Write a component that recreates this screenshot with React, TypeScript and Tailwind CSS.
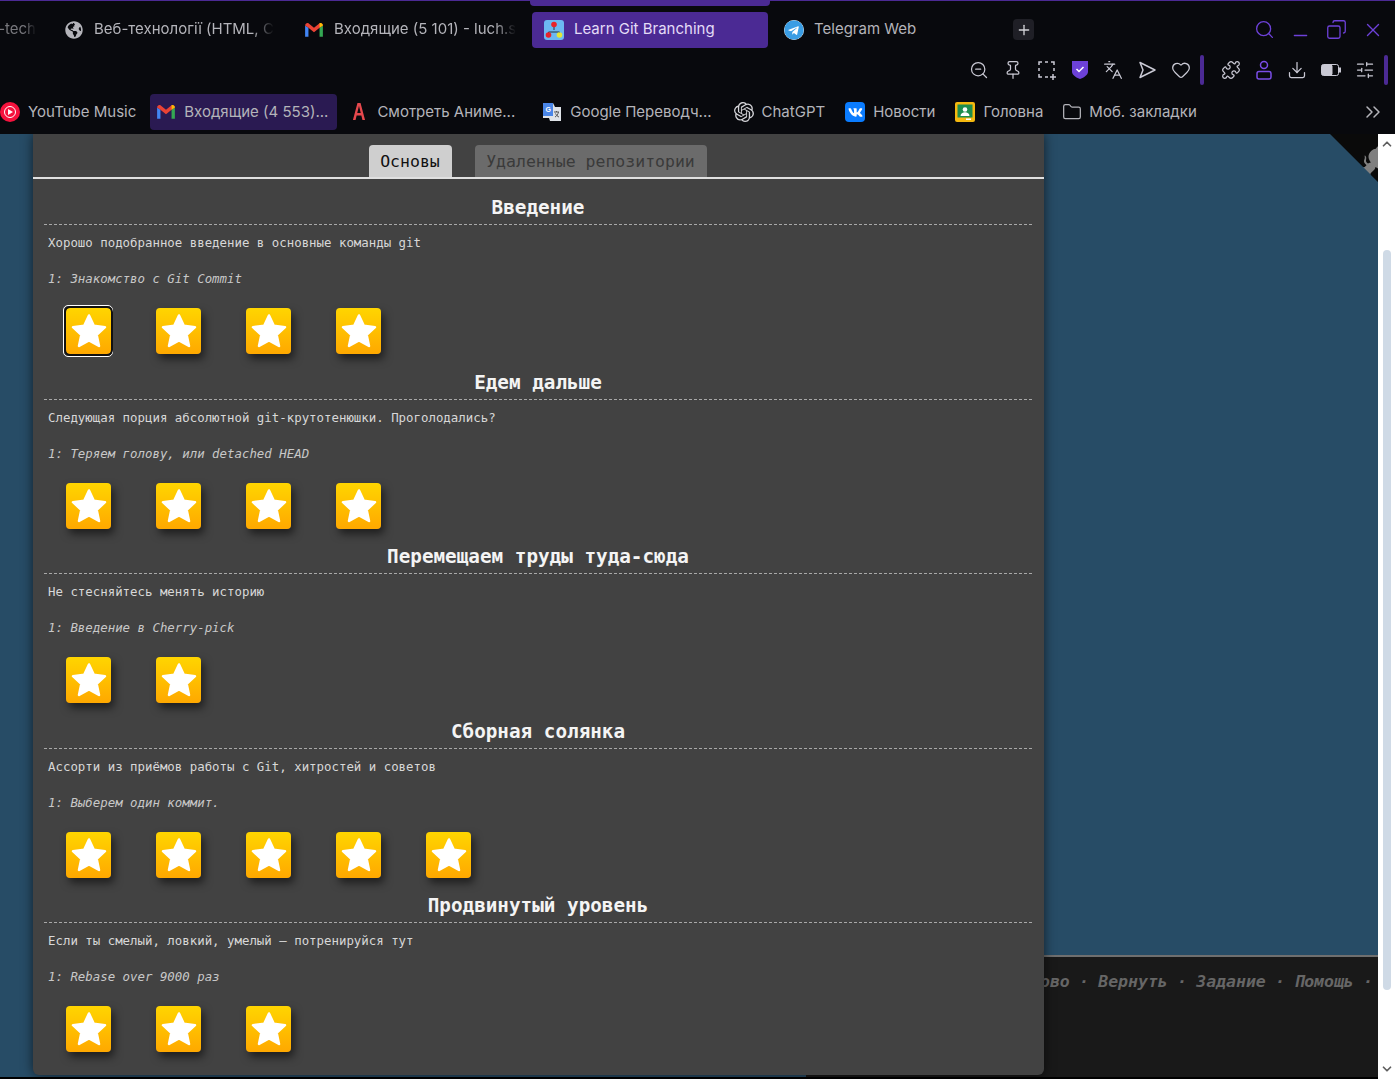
import type { ReactNode } from 'react';
import {
  ZoomOut,
  Pin,
  Languages,
  Heart,
  Puzzle,
  Download,
  SlidersHorizontal,
  Folder,
  Search,
  Minus,
  Copy,
  X,
  Plus,
  ChevronsRight,
  ChevronUp,
  ChevronDown,
} from 'lucide-react';
import { FaGlobeAmericas, FaTelegram, FaVk } from 'react-icons/fa';
import { SiOpenai } from 'react-icons/si';

const sections = [
  {
    title: 'Введение',
    text: 'Хорошо подобранное введение в основные команды git',
    level: '1: Знакомство с Git Commit',
    stars: 4,
    selected: true,
  },
  {
    title: 'Едем дальше',
    text: 'Следующая порция абсолютной git-крутотенюшки. Проголодались?',
    level: '1: Теряем голову, или detached HEAD',
    stars: 4,
  },
  {
    title: 'Перемещаем труды туда-сюда',
    text: 'Не стесняйтесь менять историю',
    level: '1: Введение в Cherry-pick',
    stars: 2,
  },
  {
    title: 'Сборная солянка',
    text: 'Ассорти из приёмов работы с Git, хитростей и советов',
    level: '1: Выберем один коммит.',
    stars: 5,
  },
  {
    title: 'Продвинутый уровень',
    text: 'Если ты смелый, ловкий, умелый – потренируйся тут',
    level: '1: Rebase over 9000 раз',
    stars: 3,
  },
];

function GmailIcon({ className }: { className?: string }) {
  return (
    <svg viewBox="0 0 18 14" className={className}>
      <path d="M1 13V3l3 2v8z" fill="#4285f4" />
      <path d="M14 13V5l3-2v10z" fill="#34a853" />
      <path d="M1 3c0-2 2-2.700 3-2l5 4 5-4c1-.7 3 0 3 2l-3 2-5 4-5-4z" fill="#ea4335" />
      <path d="M14 1c1-.7 3 0 3 2l-3 2z" fill="#fbbc04" />
    </svg>
  );
}

function GitBranchIcon() {
  return (
    <svg viewBox="0 0 20 20" className="w-5 h-5 rounded-[3px] bg-[#6cb8f2]">
      <path d="M10 5v5M4.500 15v-3h11v3" stroke="#27323f" strokeWidth="1" fill="none" />
      <circle cx="10" cy="4.500" r="2.800" fill="#e8232a" />
      <circle cx="4.500" cy="15" r="2.800" fill="#e8232a" />
      <circle cx="15.500" cy="15" r="2.800" fill="#e6e635" />
    </svg>
  );
}

function YoutubeMusicIcon() {
  return (
    <svg viewBox="0 0 20 20" className="w-5 h-5">
      <circle cx="10" cy="10" r="10" fill="#f5123d" />
      <circle cx="10" cy="10" r="5.500" fill="none" stroke="#fff" strokeWidth="1" />
      <path d="M8 7l5 3-5 3z" fill="#fff" />
    </svg>
  );
}

function TranslateIcon() {
  return (
    <svg viewBox="0 0 20 20" className="w-5 h-5">
      <path d="M1 1h10l2 4 6 0v14H8l-1-3H1z" fill="#dfe3e8" />
      <path d="M1 1h10v13H1z" fill="#4a86e8" />
      <text x="3.500" y="10" fontSize="7" fontWeight="700" fill="#fff" fontFamily="Liberation Sans, sans-serif">G</text>
      <path d="M12 10h5M14.500 9v1M13 15c2-1 3-3 3.500-5M13.500 11.500c.8 1.600 2 3 3.500 3.500" stroke="#555" strokeWidth="1" fill="none" />
    </svg>
  );
}

function VkIcon() {
  return (
    <div className="w-5 h-5 rounded-[4px] bg-[#0a7cff] flex items-center justify-center">
      <FaVk className="w-[15px] h-[15px] text-white" />
    </div>
  );
}

function ClassroomIcon() {
  return (
    <svg viewBox="0 0 20 20" className="w-5 h-5">
      <rect width="20" height="20" rx="2" fill="#f5b90f" />
      <rect x="2.500" y="2.500" width="15" height="13" fill="#1e8e4e" />
      <circle cx="10" cy="7.500" r="2.300" fill="#fff" />
      <path d="M5.500 14c0-5 9-5 9 0z" fill="#fff" />
      <rect x="11" y="16.500" width="5" height="1.500" fill="#fff" />
    </svg>
  );
}

function BatteryIcon() {
  return (
    <svg viewBox="0 0 20 12" className="w-5 h-3">
      <rect x="0.500" y="0.500" width="17" height="11" rx="2" fill="#08090d" stroke="#c9c9d4" />
      <rect x="0.500" y="0.500" width="11" height="11" rx="2" fill="#c9c9d4" />
      <rect x="18" y="3.500" width="2" height="5" fill="#c9c9d4" />
    </svg>
  );
}

function ShieldIcon() {
  return (
    <svg viewBox="0 0 18 20" className="w-[18px] h-5">
      <path d="M1 1h16v11c0 3-5 6-8 7-3-1-8-4-8-7z" fill="#6d41d8" />
      <path d="M5.500 9l2.500 2.500 4.500-4.500" stroke="#fff" strokeWidth="1.500" fill="none" />
    </svg>
  );
}

function ProfileIcon() {
  return (
    <svg viewBox="0 0 18 20" className="w-[18px] h-5" fill="none" stroke="#7a4de6" strokeWidth="1.500">
      <circle cx="9" cy="5" r="3.500" />
      <path d="M4 11.500h10c1 0 2 1 2 2v3.500c0 1-1 2-2 2H4c-1 0-2-1-2-2v-3.500c0-1 1-2 2-2z" />
    </svg>
  );
}

function CaptureIcon() {
  return (
    <svg viewBox="0 0 20 20" className="w-5 h-5" fill="none" stroke="currentColor" strokeWidth="1.500">
      <path d="M2 5V2h3M8 2h3M14 2h3v3M17 8v3M2 8v3M2 14v3h3M8 17h3M16 14v6M13 17h6" />
    </svg>
  );
}

function SendOutlineIcon() {
  return (
    <svg viewBox="0 0 20 20" className="w-5 h-5" fill="none" stroke="currentColor" strokeWidth="1.500" strokeLinejoin="round">
      <path d="M3 2.500L18 10 3 17.500 6 10z" />
    </svg>
  );
}

function Tab({ icon, label, active, fade }: { icon: ReactNode; label: string; active?: boolean; fade?: boolean }) {
  return (
    <div
      className={`flex items-center gap-[10px] h-[36px] pl-3 rounded-[4px] whitespace-nowrap ${
        active ? 'w-[236px] bg-[#4b2a94] text-[#e4dcf7]' : 'text-[#b4b4ba]'
      }`}
    >
      <div className="shrink-0">{icon}</div>
      <span className={fade ? '[mask-image:linear-gradient(to_right,black_88%,transparent)]' : ''}>{label}</span>
    </div>
  );
}

function Bookmark({
  icon,
  label,
  active,
  className = '',
}: {
  icon: ReactNode;
  label: string;
  active?: boolean;
  className?: string;
}) {
  return (
    <div className={`flex items-center gap-2 h-[36px] px-[6px] rounded-[4px] whitespace-nowrap ${active ? 'bg-[#2a1a52] pr-[9px]' : ''} ${className}`}>
      {icon}
      <span>{label}</span>
    </div>
  );
}

function StarButton({ selected }: { selected?: boolean }) {
  return (
    <div className={`w-[50px] h-[52px] flex items-center justify-center rounded-[5px] ${selected ? 'border border-white' : ''}`}>
      <div
        className={`w-[45px] h-[46px] rounded-[4px] bg-gradient-to-b from-[#ffd500] to-[#ffa800] flex items-center justify-center ${
          selected ? 'outline-2 outline-[#111]' : 'shadow-[3px_5px_9px_rgba(0,0,0,0.55)]'
        }`}
      >
        <svg viewBox="0 0 36 36" className="w-[36px] h-[36px] translate-x-[1px] -translate-y-[1px]">
          <path
            d="M18 3.500l4.800 10.300 11.200 1.400-8.300 7.700 2.300 11.100L18 28.500 8 34l2.300-11.100L2 15.200l11.200-1.400z"
            fill="#fff"
            stroke="#fff"
            strokeWidth="2.500"
            strokeLinejoin="round"
          />
        </svg>
      </div>
    </div>
  );
}

function Section({ section }: { section: (typeof sections)[number] }) {
  return (
    <section className="h-[174.500px]">
      <h2 className="h-[33px] pt-[4px] text-center text-[19.300px] leading-[24px] font-bold text-[#f4f4f4] border-b border-dashed border-[#a8a8a8] ml-[11px] mr-[12px] mb-[10px]">
        {section.title}
      </h2>
      <p className="pl-[15px] h-[36px] text-[12.400px] leading-[16px] text-[#d8d8d8]">{section.text}</p>
      <p className="pl-[15px] h-[34px] text-[12.400px] leading-[16px] italic text-[#c8c8c8]">{section.level}</p>
      <div className="flex gap-[40px] pl-[30px]">
        {Array.from({ length: section.stars }).map((_, i) => (
          <StarButton key={i} selected={section.selected && i === 0} />
        ))}
      </div>
    </section>
  );
}

export default function App() {
  return (
    <div className="relative w-[1395px] h-[1079px] overflow-hidden bg-[#08090d] flex flex-col font-['Inter',sans-serif]">
      {/* browser chrome */}
      <div className="h-[134px] shrink-0 border-t border-[#4b2a94] text-[#b4b4ba]">
        <div className="relative h-[47px] pt-[10px] flex items-center text-[15px]">
          <div className="absolute left-[530px] top-0 w-[240px] h-[5px] bg-[#4b2a94] rounded-b-[4px]" />
          <div className="w-[36px] shrink-0 flex justify-end whitespace-nowrap text-[#77777c] [mask-image:linear-gradient(to_right,black_70%,transparent)]">
            -tech
          </div>
          <div className="w-[252px] shrink-0 pl-[16px]">
            <Tab fade icon={<FaGlobeAmericas className="w-[18px] h-[18px] text-[#b4b4ba] ml-[1px] mr-[1px]" />} label="Веб-технології (HTML, C" />
          </div>
          <div className="w-[232px] shrink-0 ml-[4px]">
            <Tab fade icon={<GmailIcon className="w-[20px] h-[16px]" />} label="Входящие (5 101) - luch.s" />
          </div>
          <div className="ml-[8px]">
            <Tab active icon={<GitBranchIcon />} label="Learn Git Branching" />
          </div>
          <div className="ml-[4px]">
            <Tab icon={<FaTelegram className="w-5 h-5 text-[#3a9de4] bg-white rounded-full" />} label="Telegram Web" />
          </div>
          <div className="ml-[97px] w-[21px] h-[21px] bg-[#1f1f26] rounded-[4px] flex items-center justify-center">
            <Plus className="w-4 h-4 text-[#d4d4d8]" />
          </div>
          <div className="ml-auto flex items-center gap-[15px] pr-[11px] text-[#6d41d8]">
            <Search className="w-[21px] h-[21px]" strokeWidth={1.5} />
            <Minus className="w-[21px] h-[21px] translate-y-[6px]" strokeWidth={1.5} />
            <Copy className="w-[21px] h-[21px] -scale-x-100" strokeWidth={1.5} />
            <X className="w-[22px] h-[22px]" strokeWidth={1.5} />
          </div>
        </div>
        <div className="h-[43px] flex items-center justify-end gap-[14px] pr-[7px] text-[#c9c9d4]">
          <ZoomOut className="w-5 h-5" strokeWidth={1.5} />
          <Pin className="w-5 h-5" strokeWidth={1.5} />
          <CaptureIcon />
          <ShieldIcon />
          <Languages className="w-5 h-5" strokeWidth={1.5} />
          <SendOutlineIcon />
          <Heart className="w-5 h-5" strokeWidth={1.5} />
          <div className="w-[4px] h-[30px] -ml-[5px] mr-[3px] rounded-sm bg-[#4b2a94]" />
          <Puzzle className="w-5 h-5" strokeWidth={1.5} />
          <ProfileIcon />
          <Download className="w-5 h-5" strokeWidth={1.5} />
          <BatteryIcon />
          <SlidersHorizontal className="w-5 h-5" strokeWidth={1.5} />
          <div className="w-[4px] h-[30px] -ml-[5px] rounded-sm bg-[#4b2a94]" />
        </div>
        <div className="h-[36px] mt-[3px] flex items-center text-[15px] gap-[8px] -ml-[6px] pr-[10px]">
          <Bookmark icon={<YoutubeMusicIcon />} label="YouTube Music" />
          <Bookmark active icon={<GmailIcon className="w-[20px] h-[16px]" />} label="Входящие (4 553)..." />
          <Bookmark
            className="-ml-[2px]"
            icon={<span className="w-5 text-center text-[24px] leading-[24px] font-bold text-[#e5484d] font-['Liberation_Sans',sans-serif] scale-x-75">A</span>}
            label="Смотреть Аниме..."
          />
          <Bookmark className="ml-[7px]" icon={<TranslateIcon />} label="Google Переводч..." />
          <Bookmark className="ml-[2px]" icon={<SiOpenai className="w-5 h-5 text-[#d4d4d8]" />} label="ChatGPT" />
          <Bookmark icon={<VkIcon />} label="Новости" />
          <Bookmark icon={<ClassroomIcon />} label="Головна" />
          <Bookmark className="-ml-[1px] [&>span]:-ml-[1px]" icon={<Folder className="w-5 h-5" strokeWidth={1.5} />} label="Моб. закладки" />
          <ChevronsRight className="ml-auto w-6 h-6" strokeWidth={1.5} />
        </div>
      </div>

      {/* page */}
      <div className="relative flex-1 flex font-['DejaVu_Sans_Mono',monospace]">
        <div className="relative flex-1 flex flex-col bg-[#274c66] overflow-hidden">
          <div className="flex-1" />
          <div className="h-[120px] ml-[806px] bg-[#191919] border-t-2 border-[#6f6f6f] pt-[15px] flex justify-end gap-[9.250px] pr-[5px] text-[16.500px] leading-[20px] font-bold italic text-[#666666] whitespace-nowrap">
            <span>Заново</span>
            <span>·</span>
            <span>Вернуть</span>
            <span>·</span>
            <span>Задание</span>
            <span>·</span>
            <span>Помощь</span>
            <span>·</span>
          </div>
          <div className="h-[2px] bg-[#191919]">
            <div className="h-[2px] w-[806px] bg-[#274c66]" />
          </div>
          <div className="h-[2px] bg-black" />

          {/* github ribbon */}
          <svg viewBox="0 0 250 250" className="absolute top-0 left-[1330px] w-[72px] h-[72px]">
            <path d="M0,0 L115,115 L130,115 L142,142 L250,250 L250,0 Z" fill="#0a0a0a" />
            <path
              d="M128.3,109.0 C113.8,99.7 119.0,89.6 119.0,89.6 C122.0,82.7 120.5,78.6 120.5,78.6 C119.2,72.0 123.4,76.3 123.4,76.3 C127.3,80.9 125.5,87.3 125.5,87.3 C122.9,97.6 130.6,101.9 134.4,103.2"
              fill="#808080"
            />
            <path
              d="M115.0,115.0 C114.9,115.1 118.7,116.5 119.8,115.4 L133.7,101.6 C136.9,99.2 139.9,98.4 142.2,98.6 C133.8,88.0 127.5,74.4 143.8,58.0 C148.5,53.4 154.0,51.2 159.7,51.0 C160.3,49.4 163.2,43.6 171.4,40.1 C171.4,40.1 176.1,42.5 178.8,56.2 C183.1,58.6 187.2,61.8 190.9,65.4 C194.5,69.0 197.7,73.2 200.1,77.6 C213.8,80.2 216.3,84.9 216.3,84.9 C212.7,93.1 206.9,96.0 205.4,96.6 C205.1,102.4 203.0,107.8 198.3,112.5 C181.9,128.9 168.3,122.5 157.7,114.1 C157.9,116.9 156.7,120.9 152.7,124.9 L141.0,136.5 C139.8,137.7 141.6,141.9 141.8,141.8 Z"
              fill="#808080"
            />
          </svg>

          {/* levels dialog */}
          <div className="absolute left-[33px] top-0 w-[1011px] h-[941px] bg-[#424242] rounded-b-[6px] shadow-[0_0_12px_rgba(0,0,0,0.6)]">
            <div className="h-[45px] pt-[11px] pr-[2px] border-b-2 border-[#e0e0e0] flex justify-center gap-[23px] text-[16.500px]">
              <div className="w-[83px] h-[32px] pt-[3px] bg-[#cfcfcf] text-[#111] rounded-t-[4px] flex items-center justify-center">
                Основы
              </div>
              <div className="w-[232px] h-[32px] pt-[3px] bg-[#6b6b6b] text-[#3a3a3a] rounded-t-[4px] flex items-center justify-center">
                Удаленные репозитории
              </div>
            </div>
            <div className="pt-[13px]">
              {sections.map((section) => (
                <Section key={section.title} section={section} />
              ))}
            </div>
          </div>
        </div>

        {/* scrollbar */}
        <div className="w-[17px] shrink-0 bg-white flex flex-col items-center py-[3px] text-[#5f5f5f]">
          <ChevronUp className="w-[14px] h-[14px]" strokeWidth={3} />
          <div className="w-[8px] h-[740px] mt-[99px] rounded-full bg-[#cfdae6]" />
          <ChevronDown className="w-[14px] h-[14px] mt-auto" strokeWidth={3} />
        </div>
      </div>
    </div>
  );
}
